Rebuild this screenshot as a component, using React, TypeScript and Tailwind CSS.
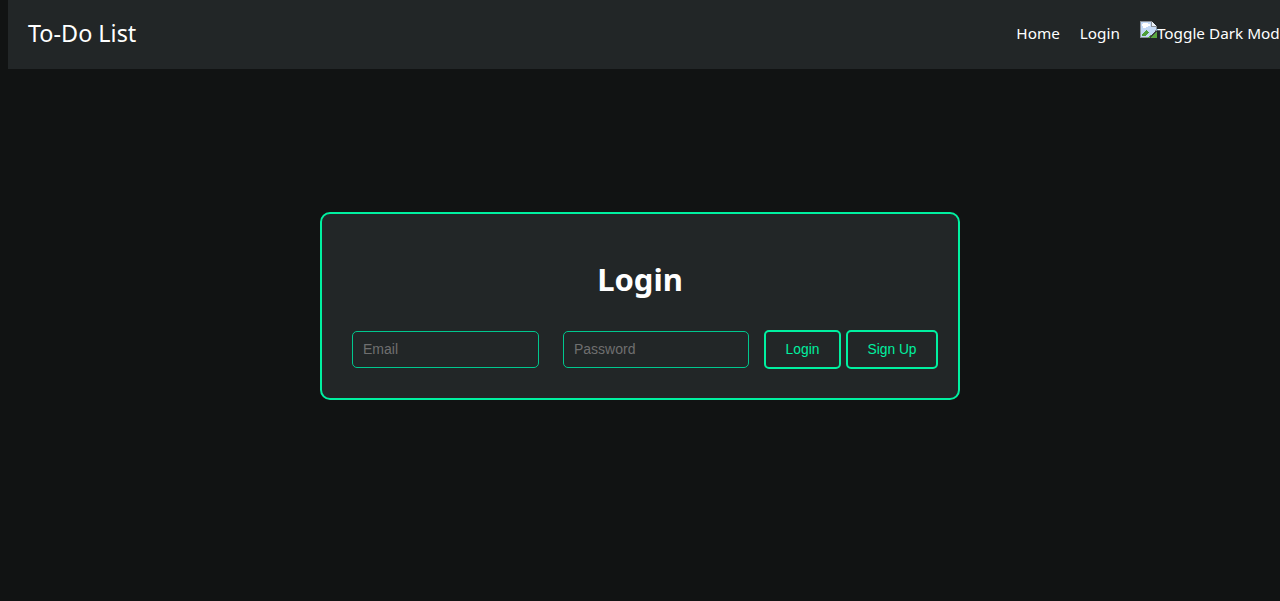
import React from "react";

function BrokenImage() {
  return (
    <svg width="17" height="17" viewBox="0 0 17 17" className="mt-[-1px] shrink-0" shapeRendering="crispEdges">
      <path d="M0.5 0.5H11.5L16.5 5.5V9L10 16.5H0.5Z" fill="#c3d9f5" stroke="#8a9097" />
      <path d="M3 2h5v1h2v2H8v1H6v1H3V5H2V3h1Z" fill="#ffffff" />
      <path d="M11.5 0.5V5.5H16.5" fill="#e8eef5" stroke="#8a9097" />
      <path d="M2 15V13L6 9L9 11L5 15Z" fill="#4f9f3a" />
      <path d="M8 16.5L16.5 9.5V16.5Z" fill="#5aa63f" />
      <path d="M10 16.5L16.5 10" fill="none" stroke="#3d3f42" />
    </svg>
  );
}

export default function App() {
  return (
    <div className="h-[601px] w-[1280px] overflow-hidden bg-[#111313] font-['Noto_Sans',sans-serif] text-white">
      <nav className="ml-2 flex h-[69px] w-[1400px] items-center bg-[#222627] pb-[2px] pl-5">
        <a className="text-[23.4px] leading-none">To-Do List</a>
        <div className="ml-[880px] flex items-center gap-5 text-[15.3px]">
          <a>Home</a>
          <a>Login</a>
          <div className="flex items-start whitespace-nowrap">
            <BrokenImage />
            <span>Toggle Dark Mode</span>
          </div>
        </div>
      </nav>
      <main className="flex justify-center pt-[143px]">
        <div className="h-[188px] w-[640px] rounded-[10px] border-2 border-[#00f0a0] bg-[#222627] px-[30px]">
          <h2 className="mt-[43px] text-center text-[31px] font-bold leading-[44px]">Login</h2>
          <form className="mt-[29px] flex w-[586px] items-center font-['Liberation_Sans',sans-serif]">
            <input
              placeholder="Email"
              className="h-[37px] w-[187px] rounded-[5px] border border-[#00c78e] bg-[#222627] px-[10px] pb-[2px] text-[14px] outline-none placeholder:text-[#6f6f6f]"
            />
            <input
              type="password"
              placeholder="Password"
              className="ml-6 h-[37px] w-[186px] rounded-[5px] border border-[#00c78e] bg-[#222627] px-[10px] pb-[2px] text-[14px] outline-none placeholder:text-[#6f6f6f]"
            />
            <button type="button" className="ml-[15px] h-[39px] w-[77px] rounded-[5px] border-2 border-[#00f0a0] pt-[2px] text-[13.8px] text-[#00f0a0]">
              Login
            </button>
            <button type="button" className="ml-[5px] h-[39px] w-[92px] rounded-[5px] border-2 border-[#00f0a0] pt-[2px] text-[13.8px] text-[#00f0a0]">
              Sign Up
            </button>
          </form>
        </div>
      </main>
    </div>
  );
}
